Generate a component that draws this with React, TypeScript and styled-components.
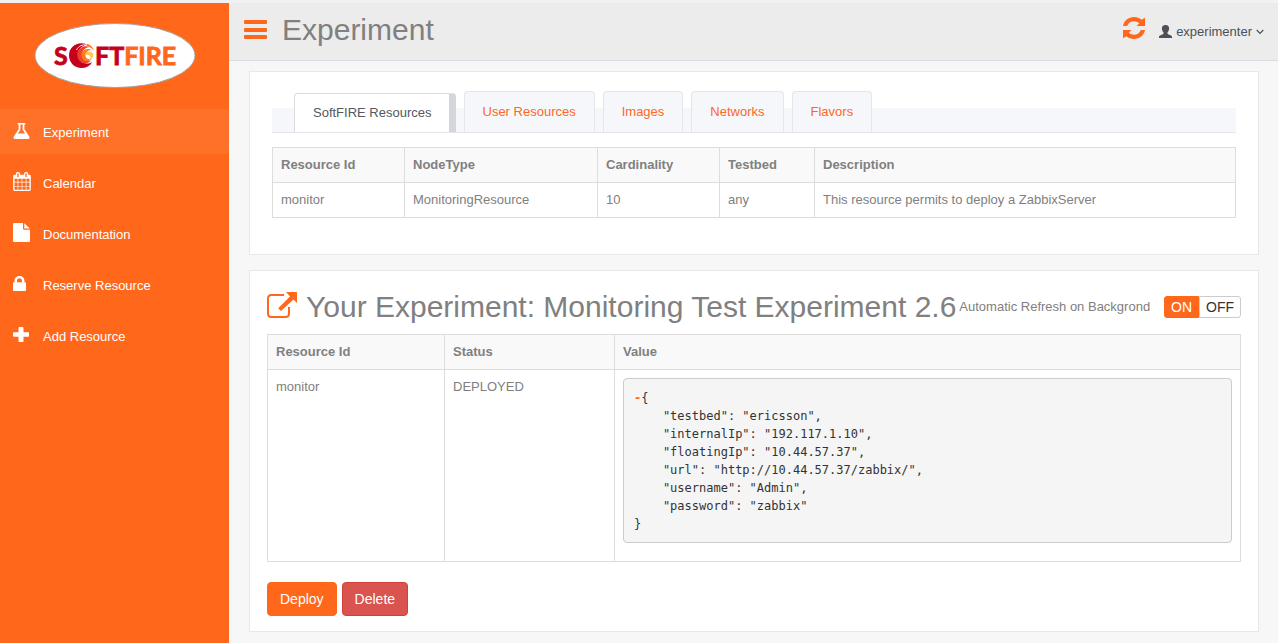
import React, { useState } from "react";
import styled, { createGlobalStyle } from "styled-components";

const ORANGE = "#ff671b";

const GlobalStyle = createGlobalStyle`
  *, *::before, *::after { box-sizing: border-box; }
  body {
    margin: 0;
    background: #f7f7f7;
    color: #808080;
    font-family: "Liberation Sans", Arial, sans-serif;
    font-size: 13px;
    line-height: 18px;
  }
  button { font-family: inherit; cursor: pointer; }
`;

const Page = styled.div`
  display: grid;
  grid-template-columns: 229px minmax(0, 1fr);
  min-height: 100vh;
  border-top: 3px solid #b4b4b4;
  border-image: linear-gradient(#f2f2f2 66%, #b0b0b0 67%) 3;
`;

const Sidebar = styled.aside`
  background: ${ORANGE};
`;

const Brand = styled.a`
  display: flex;
  justify-content: center;
  padding: 20px 0 21px;
`;

const Menu = styled.nav`
  display: flex;
  flex-direction: column;
  gap: 6px;
`;

const MenuLink = styled.a<{ $active?: boolean }>`
  display: flex;
  align-items: center;
  height: 45px;
  padding: 2px 0 0 13px;
  color: #fff;
  text-decoration: none;
  background: ${(p) => (p.$active ? "#ff7029" : "transparent")};
`;

const MenuIcon = styled.span`
  display: flex;
  width: 30px;
  padding-bottom: 4px;
`;

const Main = styled.main`
  min-width: 0;
`;

const TopBar = styled.header`
  display: flex;
  align-items: center;
  height: 58px;
  padding: 0 14px 4px 15px;
  background: #ececec;
  border-bottom: 1px solid #d9dbe2;
`;

const IconButton = styled.button`
  display: flex;
  padding: 0;
  border: 0;
  background: none;
  color: ${ORANGE};
`;

const RefreshButton = styled(IconButton)`
  padding-bottom: 4px;
`;

const Title = styled.h1`
  margin: 0;
  font-size: 30px;
  font-weight: 400;
  line-height: 34px;
`;

const PageTitle = styled(Title)`
  flex: 1;
  padding-left: 15px;
`;

const UserButton = styled.button`
  display: flex;
  align-items: center;
  gap: 4px;
  margin-left: 14px;
  padding: 4px 0 0;
  border: 0;
  background: none;
  color: #4d5056;
  font-size: 13px;
`;

const Content = styled.div`
  display: flex;
  flex-direction: column;
  gap: 15px;
  padding: 10px 19px 11px 20px;
`;

const Card = styled.section<{ $pad: string }>`
  padding: ${(p) => p.$pad};
  background: #fff;
  border: 1px solid #e7e7ec;
`;

const Tabs = styled.div`
  display: flex;
  align-items: flex-end;
  gap: 8px;
  height: 42px;
  margin-bottom: 14px;
  padding-left: 22px;
  border-bottom: 1px solid #e4e6ec;
  background: linear-gradient(#fff 17px, #f5f7fb 17px);
`;

const Tab = styled.button<{ $active: boolean }>`
  height: ${(p) => (p.$active ? 39 : 41)}px;
  padding: 0 ${(p) => (p.$active ? 17 : 18)}px 2px 18px;
  border: 1px solid ${(p) => (p.$active ? "#d9dbdf" : "#e3e6ec")};
  border-right: ${(p) => (p.$active ? "7px solid #d3d6db" : "1px solid #e3e6ec")};
  border-bottom: 0;
  border-radius: 4px 4px 0 0;
  background: ${(p) => (p.$active ? "#fff" : "#f5f7fb")};
  color: ${(p) => (p.$active ? "#55585c" : ORANGE)};
  font-size: 13px;
`;

const Table = styled.table`
  width: 100%;
  table-layout: fixed;
  border-collapse: collapse;
  text-align: left;
  th, td {
    padding: 8px;
    border: 1px solid #ddd;
    vertical-align: top;
  }
  th { background: #f9f9f9; font-weight: 700; }
`;

const Col = styled.col<{ $w?: number }>`
  width: ${(p) => (p.$w ? `${p.$w}px` : "auto")};
`;

const TitleRow = styled.div`
  display: flex;
  align-items: center;
  gap: 9px;
  margin-bottom: 10px;
`;

const RefreshGroup = styled.div`
  display: flex;
  flex: 1;
  align-items: center;
  justify-content: space-between;
  margin-left: -6px;
  white-space: nowrap;
`;

const Toggle = styled.div`
  display: flex;
`;

const ToggleButton = styled.button<{ $on: boolean }>`
  height: 22px;
  padding: 0 6px;
  border: 1px solid ${(p) => (p.$on ? ORANGE : "#ccc")};
  background: ${(p) => (p.$on ? ORANGE : "#fff")};
  color: ${(p) => (p.$on ? "#fff" : "#333")};
  font-size: 14px;
  line-height: 20px;
  &:first-child { border-radius: 3px 0 0 3px; }
  &:last-child { border-radius: 0 3px 3px 0; }
`;

const Code = styled.pre`
  margin: 0 0 10px;
  padding: 10px 10px 9px;
  border: 1px solid #ccc;
  border-radius: 4px;
  background: #f5f5f5;
  color: #333;
  font-family: "DejaVu Sans Mono", "Liberation Mono", monospace;
  font-size: 12px;
  line-height: 18px;
`;

const CodeLine = styled.span`
  display: flex;
`;

const Fold = styled.a`
  color: ${ORANGE};
  font-weight: 700;
  text-decoration: none;
`;

const Actions = styled.div`
  display: flex;
  gap: 5px;
  margin-top: 20px;
`;

const ActionButton = styled.button<{ $danger?: boolean }>`
  height: 34px;
  padding: 0 12px;
  border: 1px solid ${(p) => (p.$danger ? "#d43f3a" : ORANGE)};
  border-radius: 4px;
  background: ${(p) => (p.$danger ? "#d9534f" : ORANGE)};
  color: #fff;
  font-size: 14px;
`;

const LogoText = styled.text`
  font-family: Lato, "Liberation Sans", sans-serif;
  font-size: 25px;
  font-weight: 700;
`;

const Logo = () => (
  <svg width="162" height="65" viewBox="0 0 162 65" role="img" aria-label="SoftFIRE">
    <ellipse cx="81" cy="32.5" rx="80" ry="32" fill="#fff" stroke="#a3a3a3" />
    <LogoText x="20" y="42" fill="#c4001d" stroke="#c4001d" strokeWidth="0.8">S</LogoText>
    <LogoText x="61" y="42" fill="#c4001d" stroke="#c4001d" strokeWidth="0.8">
      FT<tspan fill={ORANGE} stroke={ORANGE}>FIRE</tspan>
    </LogoText>
    <path d="M53 21.500C44 17.500 35 23.500 35 32.500 35 39.500 40.500 45 47.500 45c4.500 0 8.500-2 10.800-6-6.300 3.500-13.300.5-14.300-5.500C43 27.500 47 23 53 21.500z" fill="#c4001d" />
    <path d="M43.500 29C46 23.500 51 22 56 24c-5 .5-8 3.500-8 8 0 4 4 7 9 6-3 3-9 3-12-1-1.500-2-2-5-1.500-8z" fill="#ef3e2a" />
    <path d="M47.500 30c2-3.500 6-5 10-3-4 .3-6 2.500-6 5.500 0 3 3 4.500 6 3.500-2 3-7 3-9 0-1-2-1.500-4-1-6z" fill="#ff7a1f" />
    <path d="M51 31c2-3 6-3 8-.5 1 3-1 6-4 6.500 2-1.500 2-3.500.5-4.500-1.500-.8-3-.5-4.500.5z" fill="#ffc65a" />
    <path d="M53 20.800c3.500 1 6 3.500 7 7-2-2.500-4.500-4-7.500-4.500z" fill="#ff7a1f" />
    <path d="M42.500 27c2-4 6-6 10-4.800" fill="none" stroke="#fff" strokeWidth="1" />
  </svg>
);

const FlaskIcon = () => (
  <svg width="17" height="16" viewBox="0 0 17 16" fill="currentColor" aria-hidden="true">
    <path
      fillRule="evenodd"
      d="M5 0h7c.7 0 .7 1.500 0 1.500h-.6v4.700l4.800 7.300c.8 1.300.3 2.500-1.200 2.500H2C.5 16 0 14.800.8 13.500l4.800-7.300V1.500H5C4.300 1.500 4.300 0 5 0zM7.400 1.500v5.100L4.900 10.400h7.200L9.600 6.600V1.500z"
    />
  </svg>
);

const CalendarIcon = () => (
  <svg width="18" height="19" viewBox="0 0 1664 1792" fill="currentColor" aria-hidden="true">
    <path
      fillRule="evenodd"
      d="M1664 384v1280q0 52-38 90t-90 38h-1408q-52 0-90-38t-38-90v-1280q0-52 38-90t90-38h128v-96q0-66 47-113t113-47h64q66 0 113 47t47 113v96h384v-96q0-66 47-113t113-47h64q66 0 113 47t47 113v96h128q52 0 90 38t38 90zM128 1664h288v-288h-288zM480 1664h320v-288h-320zM128 1312h288v-320h-288zM480 1312h320v-320h-320zM128 928h288v-288h-288zM864 1664h320v-288h-320zM480 928h320v-288h-320zM1248 1664h288v-288h-288zM864 1312h320v-320h-320zM1248 1312h288v-320h-288zM864 928h320v-288h-320zM1248 928h288v-288h-288zM416 128h64q32 0 32 32v288q0 32-32 32h-64q-32 0-32-32v-288q0-32 32-32zM1184 128h64q32 0 32 32v288q0 32-32 32h-64q-32 0-32-32v-288q0-32 32-32z"
    />
  </svg>
);

const FileIcon = () => (
  <svg width="17" height="19" viewBox="0 0 17 19" fill="currentColor" aria-hidden="true">
    <path d="M1.200 0H10v5.500c0 .8.500 1.200 1.200 1.200H17v11c0 .8-.5 1.300-1.300 1.300H1.300C.5 19 0 18.500 0 17.700V1.200C0 .5.500 0 1.200 0zM11.300 0.200 16.800 5.600H11.300z" />
  </svg>
);

const LockIcon = () => (
  <svg width="13" height="15" viewBox="0 0 13 15" fill="currentColor" aria-hidden="true">
    <path
      fillRule="evenodd"
      d="M1.500 6.200V5C1.500 2 3.700 0 6.500 0s5 2 5 5v1.200h.5c.6 0 1 .4 1 1V14c0 .6-.4 1-1 1H1c-.6 0-1-.4-1-1V7.200c0-.6.4-1 1-1zM4 6.200h5V5c0-1.700-1-2.700-2.500-2.700S4 3.300 4 5z"
    />
  </svg>
);

const PlusIcon = () => (
  <svg width="16" height="15" viewBox="0 0 16 15" fill="currentColor" aria-hidden="true">
    <path d="M6.300 0h3.400c.5 0 .8.300.8.800v4.400h4.700c.5 0 .8.300.8.800v3c0 .5-.3.800-.8.800h-4.700v4.400c0 .5-.3.800-.8.800H6.300c-.5 0-.8-.3-.8-.8V9.800H.8C.3 9.800 0 9.500 0 9V6c0-.5.300-.8.800-.8h4.700V.8c0-.5.300-.8.800-.8z" />
  </svg>
);

const BarsIcon = () => (
  <svg width="23" height="20" viewBox="0 0 23 20" fill="currentColor" aria-hidden="true">
    <rect y="0" width="23" height="4" rx="1" />
    <rect y="8" width="23" height="4" rx="1" />
    <rect y="15" width="23" height="4" rx="1" />
  </svg>
);

const RefreshIcon = () => (
  <svg width="22" height="22" viewBox="0 0 22 22" fill="currentColor" aria-hidden="true">
    <path d="M0 9C1 3.500 5.500 0 11 0c3 0 5.500 1 7.500 2.700L22 .8V9h-8.500l2.800-2.800C14.800 4.900 13 4.200 11 4.200 7.800 4.200 5.200 6 4.200 9z" />
    <path d="M22 13c-1 5.500-5.500 9-11 9-3 0-5.500-1-7.500-2.700L0 21.200V13h8.500l-2.800 2.800c1.500 1.300 3.300 2 5.300 2 3.200 0 5.800-1.800 6.800-4.800z" />
  </svg>
);

const UserIcon = () => (
  <svg width="13" height="13" viewBox="0 0 13 13" fill="currentColor" aria-hidden="true">
    <path d="M6.500 0C9 0 10.300 1.500 10.100 3.700 10 5.300 9.300 6.500 8.500 7.300v1c0 .5.200.7.600.9l2.900 1.300c.7.300 1 .7 1 1.400v1.100H0v-1.100c0-.7.3-1.100 1-1.400l2.900-1.300c.4-.2.6-.4.6-.9v-1C3.700 6.500 3 5.300 2.900 3.700 2.700 1.500 4 0 6.500 0z" />
  </svg>
);

const ChevronIcon = () => (
  <svg width="8" height="6" viewBox="0 0 8 6" fill="none" stroke="currentColor" aria-hidden="true">
    <path d="M.7 1 4 4.300 7.300 1" strokeWidth="1.200" />
  </svg>
);

const OpenIcon = () => (
  <svg width="30" height="30" viewBox="0 0 30 30" aria-hidden="true">
    <path d="M17 3H4.500Q1 3 1 6.500V21.500Q1 25 4.500 25H18.500Q22 25 22 21.500V15" fill="none" stroke={ORANGE} strokeWidth="2" />
    <path d="M19 0h10.200q.8 0 .8.800V11l-3.500-3.500L14 19l-2.800-2.800L23 4.500z" fill={ORANGE} />
  </svg>
);

const menu = [
  { label: "Experiment", Icon: FlaskIcon },
  { label: "Calendar", Icon: CalendarIcon },
  { label: "Documentation", Icon: FileIcon },
  { label: "Reserve Resource", Icon: LockIcon },
  { label: "Add Resource", Icon: PlusIcon },
];

const tabs = ["SoftFIRE Resources", "User Resources", "Images", "Networks", "Flavors"];

const valueLines = [
  '    "testbed": "ericsson",',
  '    "internalIp": "192.117.1.10",',
  '    "floatingIp": "10.44.57.37",',
  '    "url": "http://10.44.57.37/zabbix/",',
  '    "username": "Admin",',
  '    "password": "zabbix"',
  "}",
];

export default function App() {
  const [tab, setTab] = useState(tabs[0]);
  const [auto, setAuto] = useState(true);

  return (
    <>
      <GlobalStyle />
      <Page>
        <Sidebar>
          <Brand href="#"><Logo /></Brand>
          <Menu>
            {menu.map(({ label, Icon }, i) => (
              <MenuLink key={label} href="#" $active={i === 0}>
                <MenuIcon><Icon /></MenuIcon>
                {label}
              </MenuLink>
            ))}
          </Menu>
        </Sidebar>
        <Main>
          <TopBar>
            <IconButton aria-label="Toggle menu"><BarsIcon /></IconButton>
            <PageTitle>Experiment</PageTitle>
            <RefreshButton aria-label="Refresh"><RefreshIcon /></RefreshButton>
            <UserButton><UserIcon />experimenter<ChevronIcon /></UserButton>
          </TopBar>
          <Content>
            <Card $pad="19px 22px 36px">
              <Tabs role="tablist">
                {tabs.map((t) => (
                  <Tab key={t} role="tab" aria-selected={t === tab} $active={t === tab} onClick={() => setTab(t)}>
                    {t}
                  </Tab>
                ))}
              </Tabs>
              <Table>
                <colgroup>
                  <Col $w={132} /><Col $w={193} /><Col $w={122} /><Col $w={95} /><Col />
                </colgroup>
                <thead>
                  <tr><th>Resource Id</th><th>NodeType</th><th>Cardinality</th><th>Testbed</th><th>Description</th></tr>
                </thead>
                <tbody>
                  <tr>
                    <td>monitor</td><td>MonitoringResource</td><td>10</td><td>any</td>
                    <td>This resource permits to deploy a ZabbixServer</td>
                  </tr>
                </tbody>
              </Table>
            </Card>
            <Card $pad="19px 17px 15px">
              <TitleRow>
                <OpenIcon />
                <Title as="h2">Your Experiment: Monitoring Test Experiment 2.6</Title>
                <RefreshGroup>
                  <span id="auto-refresh">Automatic Refresh on Backgrond</span>
                  <Toggle role="group" aria-labelledby="auto-refresh">
                    <ToggleButton $on={auto} aria-pressed={auto} onClick={() => setAuto(true)}>ON</ToggleButton>
                    <ToggleButton $on={!auto} aria-pressed={!auto} onClick={() => setAuto(false)}>OFF</ToggleButton>
                  </Toggle>
                </RefreshGroup>
              </TitleRow>
              <Table>
                <colgroup>
                  <Col $w={177} /><Col $w={170} /><Col />
                </colgroup>
                <thead>
                  <tr><th>Resource Id</th><th>Status</th><th>Value</th></tr>
                </thead>
                <tbody>
                  <tr>
                    <td>monitor</td>
                    <td>DEPLOYED</td>
                    <td>
                      <Code>
                        <CodeLine><Fold href="#">-</Fold><span>{"{"}</span></CodeLine>
                        {valueLines.map((line) => <CodeLine key={line}>{line}</CodeLine>)}
                      </Code>
                    </td>
                  </tr>
                </tbody>
              </Table>
              <Actions>
                <ActionButton>Deploy</ActionButton>
                <ActionButton $danger>Delete</ActionButton>
              </Actions>
            </Card>
          </Content>
        </Main>
      </Page>
    </>
  );
}
